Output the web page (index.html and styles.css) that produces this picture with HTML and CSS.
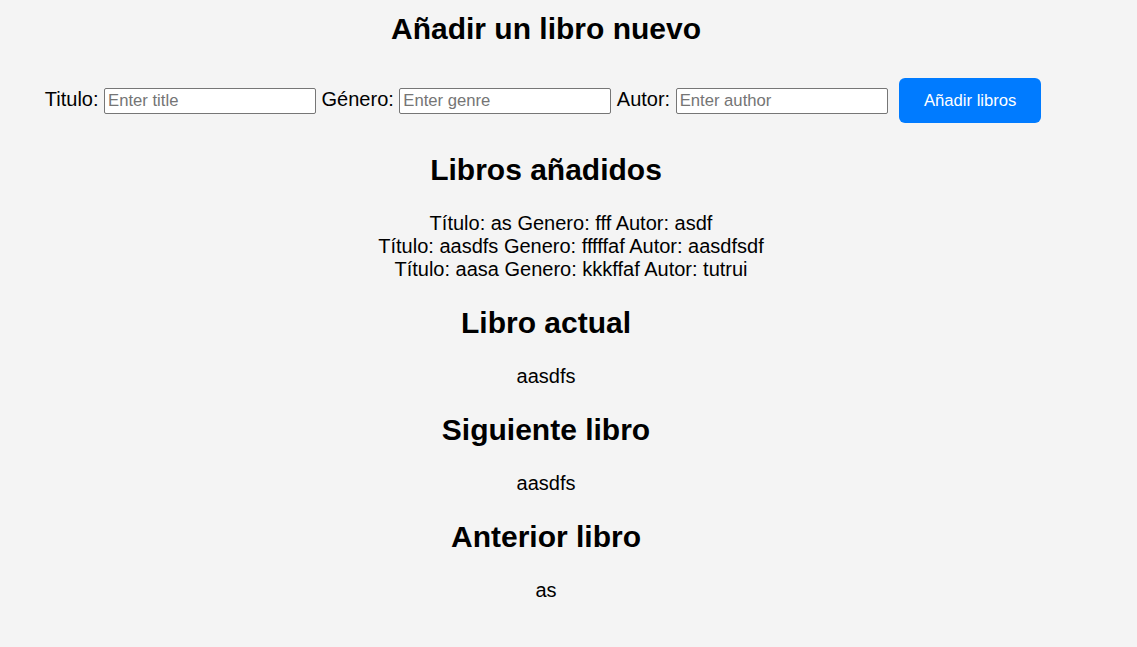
FILE: index.html
```html
<!DOCTYPE html>
<html lang="es">
<head>
<meta charset="utf-8">
<title>Libros</title>
<link rel="stylesheet" href="styles.css">
</head>
<body>
<div class="page">
  <h1 class="title">Añadir un libro nuevo</h1>
  <form class="book-form">
    <label class="field-label" for="t">Titulo:</label>
    <input class="field" id="t" type="text" placeholder="Enter title">
    <label class="field-label" for="g">Género:</label>
    <input class="field" id="g" type="text" placeholder="Enter genre">
    <label class="field-label" for="a">Autor:</label>
    <input class="field" id="a" type="text" placeholder="Enter author">
    <button class="add-btn" type="button">Añadir libros</button>
  </form>

  <h2 class="section-title">Libros añadidos</h2>
  <ul class="book-list">
    <li>Título: as Genero: fff Autor: asdf</li>
    <li>Título: aasdfs Genero: fffffaf Autor: aasdfsdf</li>
    <li>Título: aasa Genero: kkkffaf Autor: tutrui</li>
  </ul>

  <h2 class="section-title">Libro actual</h2>
  <p class="section-text">aasdfs</p>

  <h2 class="section-title">Siguiente libro</h2>
  <p class="section-text">aasdfs</p>

  <h2 class="section-title">Anterior libro</h2>
  <p class="section-text">as</p>
</div>
</body>
</html>
```

FILE: styles.css
```css
html, body {
  margin: 0;
  padding: 0;
}
body {
  background: #f4f4f4;
  color: #000;
  font-family: "Liberation Sans", Arial, sans-serif;
  font-size: 20px;
}
.page {
  width: 1092px;
  text-align: center;
  padding-top: 12px;
}
.title {
  font-size: 30px;
  font-weight: bold;
  line-height: 34px;
  margin: 0;
}
.book-form {
  display: flex;
  justify-content: center;
  align-items: baseline;
  gap: 5.5px;
  margin: 32px 0 30px;
}
.field-label {
  font-size: 20px;
  line-height: 23px;
}
.field {
  box-sizing: border-box;
  width: 212px;
  height: 26px;
  margin: 0;
  padding: 1px 3px;
  border: 1px solid #767676;
  border-radius: 2px;
  background: #fff;
  font-family: "Liberation Sans", Arial, sans-serif;
  font-size: 16.67px;
  color: #000;
}
.field::placeholder {
  color: #757575;
}
.add-btn {
  box-sizing: border-box;
  width: 142px;
  height: 45px;
  margin: 0 6px;
  padding: 0;
  border: none;
  border-radius: 6px;
  background: #007bff;
  color: #fff;
  font-family: "Liberation Sans", Arial, sans-serif;
  font-size: 16.67px;
  cursor: pointer;
}
.section-title {
  font-size: 30px;
  font-weight: bold;
  line-height: 34px;
  margin: 25px 0;
}
.book-list {
  list-style: none;
  margin: 20px 0;
  padding-left: 50px;
  line-height: 23px;
}
.section-text {
  margin: 20px 0;
  line-height: 23px;
}
```
